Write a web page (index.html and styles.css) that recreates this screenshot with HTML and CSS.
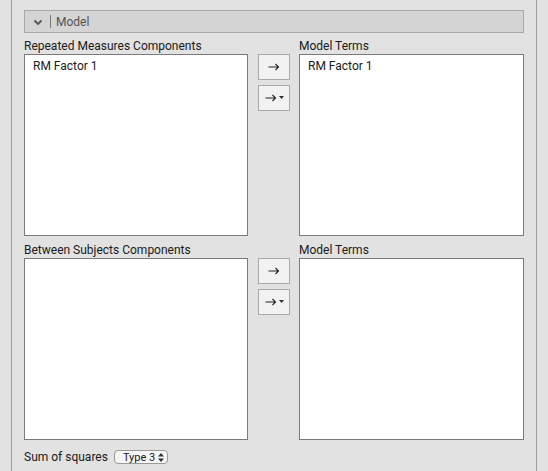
FILE: index.html
```html
<!DOCTYPE html>
<html>
<head>
<meta charset="utf-8">
<link rel="stylesheet" href="styles.css">
</head>
<body>
<div class="panel">
  <div class="section-header">
    <svg class="chev" width="10" height="7" viewBox="0 0 10 7"><path d="M1.5 1.5 L5 5 L8.5 1.5" fill="none" stroke="#555" stroke-width="1.8"/></svg>
    <span class="sep"></span>
    <span class="title">Model</span>
  </div>

  <div class="assign">
    <div class="col">
      <div class="label">Repeated Measures Components</div>
      <div class="list"><div class="item">RM Factor 1</div></div>
    </div>
    <div class="buttons">
      <div class="btn"><svg width="12" height="8" viewBox="0 0 12 8"><path d="M0.5 4 H10.5 M7.5 1 L10.5 4 L7.5 7" fill="none" stroke="#222" stroke-width="1.1"/></svg></div>
      <div class="btn"><svg width="12" height="8" viewBox="0 0 12 8"><path d="M0.5 4 H10.5 M7.5 1 L10.5 4 L7.5 7" fill="none" stroke="#222" stroke-width="1.1"/></svg><svg class="tri" width="5" height="3" viewBox="0 0 5 3"><path d="M0 0 H5 L2.5 3 Z" fill="#333"/></svg></div>
    </div>
    <div class="col">
      <div class="label">Model Terms</div>
      <div class="list"><div class="item">RM Factor 1</div></div>
    </div>
  </div>

  <div class="assign second">
    <div class="col">
      <div class="label">Between Subjects Components</div>
      <div class="list"></div>
    </div>
    <div class="buttons">
      <div class="btn"><svg width="12" height="8" viewBox="0 0 12 8"><path d="M0.5 4 H10.5 M7.5 1 L10.5 4 L7.5 7" fill="none" stroke="#222" stroke-width="1.1"/></svg></div>
      <div class="btn"><svg width="12" height="8" viewBox="0 0 12 8"><path d="M0.5 4 H10.5 M7.5 1 L10.5 4 L7.5 7" fill="none" stroke="#222" stroke-width="1.1"/></svg><svg class="tri" width="5" height="3" viewBox="0 0 5 3"><path d="M0 0 H5 L2.5 3 Z" fill="#333"/></svg></div>
    </div>
    <div class="col">
      <div class="label">Model Terms</div>
      <div class="list"></div>
    </div>
  </div>

  <div class="sumsq">
    <span>Sum of squares</span>
    <span class="dropdown">Type 3<svg width="6" height="9" viewBox="0 0 6 9"><path d="M0 3.5 L3 0 L6 3.5 Z M0 5.5 L3 9 L6 5.5 Z" fill="#333"/></svg></span>
  </div>
</div>
</body>
</html>
```

FILE: styles.css
```css
html, body {
  margin: 0;
  padding: 0;
  background: #e2e2e2;
  font-family: Roboto, "Liberation Sans", Arial, sans-serif;
  font-size: 12px;
  color: #1a1a1a;
}

.panel {
  margin-left: 11px;
  width: 526px;
  height: 471px;
  border-left: 1px solid #9c9c9c;
  border-right: 1px solid #9c9c9c;
  padding: 10px 12px 0 12px;
  box-sizing: border-box;
}

.section-header {
  height: 23px;
  box-sizing: border-box;
  background: #d4d4d4;
  border: 1px solid #a9a9a9;
  display: flex;
  align-items: center;
  padding-left: 8px;
  color: #555;
}

.chev { margin-top: 1px; }

.sep {
  width: 1px;
  height: 13px;
  background: #777;
  margin-left: 7px;
  margin-right: 5px;
}

.title { font-size: 12px; color: #555; }

.assign {
  display: grid;
  grid-template-columns: 224px 51px 225px;
  margin-top: 6px;
}

.assign.second { margin-top: 7px; }

.label {
  height: 15px;
  line-height: 15px;
  color: #1a1a1a;
}

.list {
  height: 182px;
  box-sizing: border-box;
  background: #ffffff;
  border: 1px solid #7a7a7a;
  padding: 4px 0 0 8px;
}

.item { line-height: 14px; }

.buttons {
  display: flex;
  flex-direction: column;
  gap: 5px;
  padding-top: 15px;
  padding-left: 10px;
}

.btn {
  width: 32px;
  height: 26px;
  box-sizing: border-box;
  border: 1px solid #a9a9a9;
  background: #f2f2f2;
  display: flex;
  align-items: center;
  justify-content: center;
  gap: 2px;
}

.tri { margin-top: -1px; }

.sumsq {
  display: flex;
  align-items: center;
  gap: 6px;
  margin-top: 10px;
}

.dropdown {
  display: inline-flex;
  align-items: center;
  gap: 3px;
  height: 14px;
  box-sizing: border-box;
  padding: 0 3px 0 8px;
  border: 1px solid #9a9a9a;
  border-radius: 4px;
  background: #f5f5f5;
  font-size: 11px;
}
```
